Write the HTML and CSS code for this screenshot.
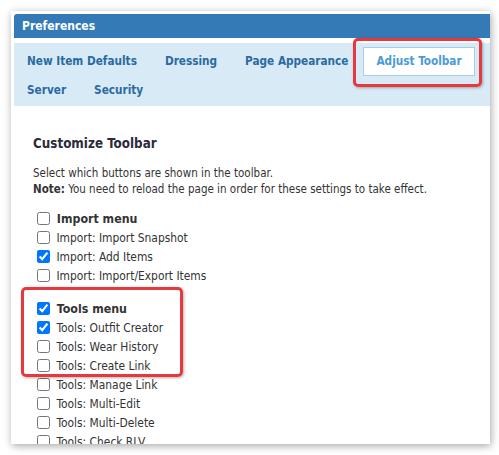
FILE: index.html
```html
<!DOCTYPE html>
<html>
<head>
<meta charset="utf-8">
<link rel="stylesheet" href="styles.css">
</head>
<body>
<div class="window">
  <div class="header">Preferences</div>
  <div class="tabs">
    <div class="tab">New Item Defaults</div>
    <div class="tab">Dressing</div>
    <div class="tab">Page Appearance</div>
    <div class="tab active">Adjust Toolbar</div>
    <div class="tab">Server</div>
    <div class="tab">Security</div>
  </div>
  <div class="content">
    <h2 class="title">Customize Toolbar</h2>
    <p class="desc">Select which buttons are shown in the toolbar.<br><b>Note:</b> You need to reload the page in order for these settings to take effect.</p>
    <div class="group">
      <label class="item main"><input type="checkbox"> Import menu</label>
      <label class="item"><input type="checkbox"> Import: Import Snapshot</label>
      <label class="item"><input type="checkbox" checked> Import: Add Items</label>
      <label class="item"><input type="checkbox"> Import: Import/Export Items</label>
    </div>
    <div class="group">
      <label class="item main"><input type="checkbox" checked> Tools menu</label>
      <label class="item"><input type="checkbox" checked> Tools: Outfit Creator</label>
      <label class="item"><input type="checkbox"> Tools: Wear History</label>
      <label class="item"><input type="checkbox"> Tools: Create Link</label>
      <label class="item"><input type="checkbox"> Tools: Manage Link</label>
      <label class="item"><input type="checkbox"> Tools: Multi-Edit</label>
      <label class="item"><input type="checkbox"> Tools: Multi-Delete</label>
      <label class="item"><input type="checkbox"> Tools: Check RLV</label>
    </div>
  </div>
</div>
<div class="mark mark-tab"></div>
<div class="mark mark-tools"></div>
</body>
</html>
```
FILE: styles.css
```css
html, body {
  margin: 0;
  padding: 0;
  background: #ffffff;
}
body {
  font-family: "DejaVu Sans Condensed", "DejaVu Sans", sans-serif;
  color: #333333;
  position: relative;
  width: 499px;
  height: 455px;
  overflow: hidden;
}
.window {
  margin: 11px 0 0 11px;
  width: 476px;
  height: 430px;
  padding: 3px 0 0 3px;
  background: #ffffff;
  overflow: hidden;
  box-shadow: 1px 2px 8px rgba(0, 0, 0, 0.35);
}
.header {
  height: 24px;
  line-height: 24px;
  background: #337ab7;
  color: #ffffff;
  font-weight: bold;
  font-size: 12px;
  padding-left: 8px;
  border-radius: 3px 0 0 0;
}
.tabs {
  margin-top: 5px;
  background: #d9eaf7;
  display: flex;
  flex-wrap: wrap;
  padding: 4px 0 1px 0;
}
.tab {
  height: 27px;
  line-height: 27px;
  padding: 0 12px;
  border: 1px solid transparent;
  margin-right: 2px;
  margin-bottom: 0;
  font-weight: bold;
  font-size: 11.7px;
  color: #2a6aa0;
  white-space: nowrap;
}
.tab.active {
  background: #ffffff;
  border-color: #a9cde9;
  color: #4a9bd8;
}
.content {
  padding: 0 0 0 19px;
}
.title {
  margin: 28px 0 0 0;
  font-size: 13.3px;
  font-weight: bold;
  line-height: 20px;
  color: #2b2b3a;
}
.desc {
  margin: 11px 0 12px 0;
  font-size: 11.5px;
  line-height: 16px;
}
.group {
  display: flex;
  flex-direction: column;
  margin-bottom: 14px;
}
.item {
  display: flex;
  align-items: center;
  height: 19px;
  font-size: 11.9px;
  white-space: pre;
}
.item input {
  margin: 0 3px 0 4px;
  width: 13px;
  height: 13px;
}
.item.main {
  font-weight: bold;
  font-size: 12.3px;
}
.mark {
  position: absolute;
  border: 3px solid #e5393e;
  border-radius: 5px;
  box-shadow: 1px 1px 3px rgba(0, 0, 0, 0.3);
}
.mark-tab {
  left: 353px;
  top: 38px;
  width: 123px;
  height: 43px;
}
.mark-tools {
  left: 21px;
  top: 287px;
  width: 156px;
  height: 84px;
}
```
